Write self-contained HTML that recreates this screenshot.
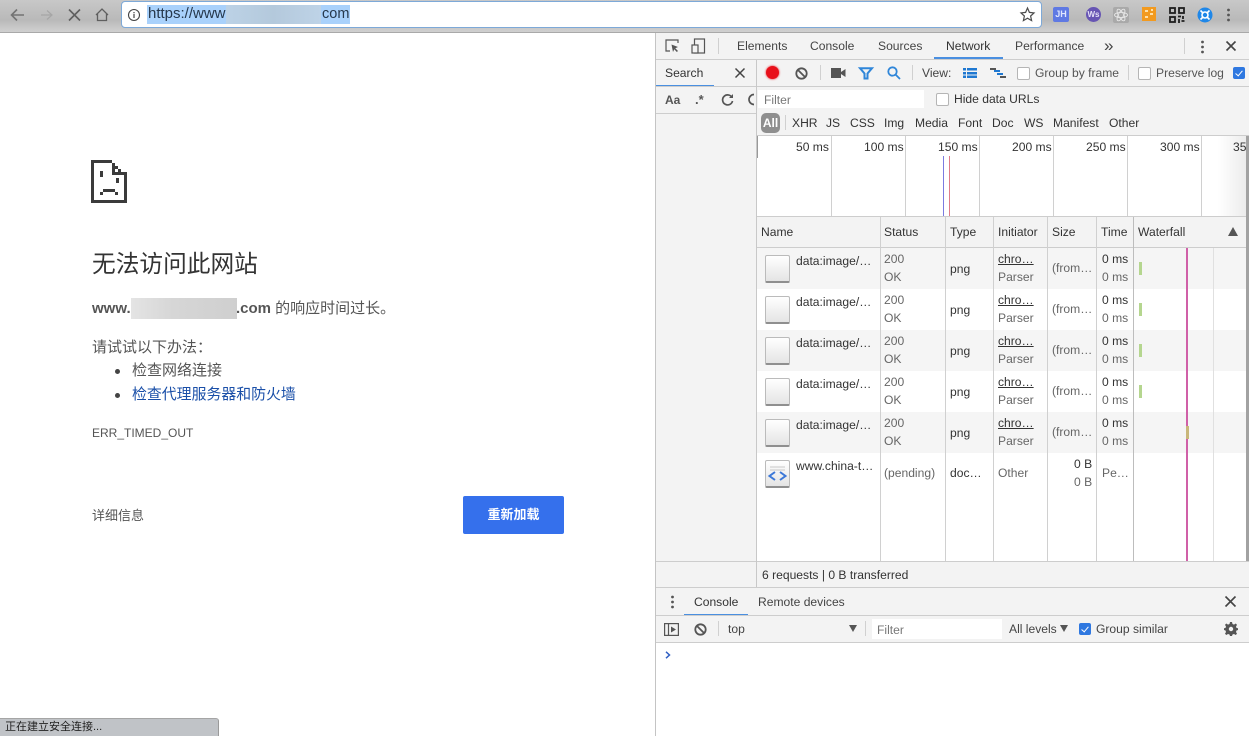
<!DOCTYPE html>
<html lang="zh">
<head>
<meta charset="utf-8">
<style>
html,body{margin:0;padding:0;width:1249px;height:736px;overflow:hidden;background:#fff}
body{position:relative;font-family:"Liberation Sans","Noto Sans CJK SC",sans-serif;font-size:12.1px;color:#333}
.a,.t{position:absolute}
.t{white-space:nowrap;line-height:16px}
.g{color:#666}
svg{position:absolute;overflow:visible}
.cb{position:absolute;width:11px;height:11px;background:#fff;border:1px solid #b5b5b5;border-radius:2px}
.cbc{position:absolute;width:12px;height:12px;background:#2f78e0;border-radius:2px}
.cbc:after{content:"";position:absolute;left:4px;top:1.5px;width:3px;height:6px;border:solid #fff;border-width:0 1.5px 1.5px 0;transform:rotate(40deg)}
.ic{position:absolute;width:22px;height:24px;background:linear-gradient(#fff,#e4e4e4);border:1px solid #bbb;border-bottom:2px solid #8f8f8f;border-radius:2px;box-sizing:border-box}
.v{position:absolute;width:1px;background:#d0d0d0}
.h{position:absolute;height:1px;background:#cdcdcd}
</style>
</head>
<body>
<!-- browser top bar -->
<div class="a" style="left:0;top:0;width:1249px;height:33px;background:linear-gradient(#c8c8c8,#b9b9b9 60%,#d2d2d2)"></div>
<div class="a" style="left:0;top:32px;width:1249px;height:1px;background:#a9a9a9"></div>
<svg style="left:0;top:0" width="120" height="33" fill="none" stroke-width="1.6">
<path d="M24 15H12M17 9.5 11.5 15 17 20.5" stroke="#737373"/>
<path d="M41 15H52M47 10.5 52 15 47 19.5" stroke="#a6a6a6" stroke-width="1.2"/>
<path d="M69 9.5 80 20.5M80 9.5 69 20.5" stroke="#5f5f5f"/>
<path d="M96 15 102 9 108 15M97.5 14V20.5H106.5V14" stroke="#5f5f5f" stroke-width="1.3"/>
</svg>
<!-- omnibox -->
<div class="a" style="left:121px;top:1px;width:919px;height:25px;background:#fff;border:1px solid #7da9d8;border-radius:4px"></div>
<svg style="left:127px;top:8px" width="14" height="14" fill="none" stroke="#444"><circle cx="7" cy="7" r="5.5" stroke-width="1.1"/><path d="M7 6v4M7 4v1.2" stroke-width="1.2"/></svg>
<div class="a" style="left:147px;top:5px;width:203px;height:19px;background:#a9d1fb"></div>
<div class="a" style="left:226px;top:5px;width:95px;height:19px;background:linear-gradient(90deg,#bcd2e6,#b4c9dc 50%,#bed3e7)"></div>
<div class="t" style="left:148px;top:6px;font-size:15px;color:#26384c">https://www</div>
<div class="t" style="left:322px;top:6px;font-size:14.5px;color:#26384c">com</div>
<svg style="left:1020px;top:7px" width="15" height="15" fill="none" stroke="#4c4c4c" stroke-width="1.2"><path d="M7.5 1 9.4 5.4 14 5.9 10.6 9 11.6 13.6 7.5 11.2 3.4 13.6 4.4 9 1 5.9 5.6 5.4Z"/></svg>
<!-- extensions -->
<div class="a" style="left:1053px;top:7px;width:16px;height:15px;background:#5f79e3;border-radius:2px;color:#dfe6ff;font-size:9px;font-weight:bold;line-height:15px;text-align:center">JH</div>
<div class="a" style="left:1086px;top:7px;width:15px;height:15px;background:#6755b3;border-radius:50%;color:#e6e2f7;font-size:8px;font-weight:bold;line-height:15px;text-align:center">Ws</div>
<div class="a" style="left:1113px;top:7px;width:16px;height:16px;background:#a9a9a9;border-radius:2px"></div>
<svg style="left:1113px;top:7px" width="16" height="16" fill="none" stroke="#e8e8e8" stroke-width=".9"><ellipse cx="8" cy="8" rx="6.5" ry="2.6"/><ellipse cx="8" cy="8" rx="6.5" ry="2.6" transform="rotate(60 8 8)"/><ellipse cx="8" cy="8" rx="6.5" ry="2.6" transform="rotate(120 8 8)"/></svg>
<div class="a" style="left:1142px;top:7px;width:14px;height:14px;background:#f29a1f"></div>
<svg style="left:1142px;top:7px" width="14" height="14" fill="#ffe0a8"><rect x="3" y="3" width="3" height="2"/><rect x="8" y="6" width="3" height="2"/><rect x="3" y="9" width="3" height="2"/><rect x="9" y="2" width="2" height="2"/></svg>
<svg style="left:1169px;top:7px" width="16" height="16" fill="none" stroke="#1e1e1e" stroke-width="1.8"><rect x="1" y="1" width="5" height="5"/><rect x="10" y="1" width="5" height="5"/><rect x="1" y="10" width="5" height="5"/><path d="M9 9.5h3M14 9v3M10 12v4M12.5 14h3"/></svg>
<svg style="left:1197px;top:7px" width="16" height="16"><circle cx="8" cy="8" r="7.5" fill="#1f87e8"/><circle cx="8" cy="8" r="3" fill="none" stroke="#fff" stroke-width="1.6"/><path d="M3.5 3.5 6 6M12.5 3.5 10 6M3.5 12.5 6 10M12.5 12.5 10 10" stroke="#fff" stroke-width="1.6"/></svg>
<svg style="left:1226px;top:8px" width="5" height="14" fill="#555"><circle cx="2.5" cy="2" r="1.4"/><circle cx="2.5" cy="7" r="1.4"/><circle cx="2.5" cy="12" r="1.4"/></svg>

<!-- error page -->
<svg style="left:91px;top:160px" width="37" height="43" fill="#3b3b3b" shape-rendering="crispEdges">
<path d="M0 0H21V3H3V40H33V15H36V43H0Z"/>
<rect x="21" y="3" width="3" height="3"/><rect x="24" y="6" width="3" height="3"/><rect x="27" y="9" width="3" height="3"/><rect x="30" y="12" width="6" height="3"/><rect x="21" y="6" width="3" height="9"/><rect x="21" y="12" width="9" height="3"/>
<rect x="9" y="11" width="3" height="6"/><rect x="25" y="18" width="3" height="5"/>
<rect x="12" y="29" width="12" height="3"/><rect x="9" y="32" width="3" height="3"/><rect x="24" y="32" width="3" height="3"/>
</svg>
<div class="t" style="left:92px;top:250px;font-size:23.7px;line-height:30px;color:#333">无法访问此网站</div>
<div class="t" style="left:92px;top:300px;font-size:15px;line-height:18px;color:#555"><b>www.</b></div>
<div class="a" style="left:131px;top:298px;width:106px;height:21px;background:linear-gradient(90deg,#e4e4e4,#d6d6d6 40%,#cfcfcf)"></div>
<div class="t" style="left:236px;top:300px;font-size:15px;line-height:18px;color:#555"><b>.com</b> 的响应时间过长。</div>
<div class="t" style="left:92px;top:339px;font-size:15px;line-height:18px;color:#555">请试试以下办法：</div>
<div class="a" style="left:115px;top:369px;width:5px;height:5px;border-radius:50%;background:#444"></div>
<div class="t" style="left:132px;top:362px;font-size:15px;line-height:18px;color:#555">检查网络连接</div>
<div class="a" style="left:115px;top:393px;width:5px;height:5px;border-radius:50%;background:#444"></div>
<div class="t" style="left:132px;top:386px;font-size:14.9px;line-height:18px;color:#1a4fa8">检查代理服务器和防火墙</div>
<div class="t" style="left:92px;top:425px;font-size:12px;color:#555">ERR_TIMED_OUT</div>
<div class="t" style="left:92px;top:508px;font-size:13px;color:#555">详细信息</div>
<div class="a" style="left:463px;top:496px;width:101px;height:38px;background:#3570ec;border-radius:2px;color:#fff;font-size:13px;font-weight:bold;line-height:38px;text-align:center">重新加载</div>
<div class="a" style="left:0;top:718px;width:219px;height:18px;background:#c0c3c7;border-top:1px solid #a5a5a5;border-right:1px solid #9a9a9a;border-top-right-radius:3px;box-sizing:border-box"></div>
<div class="t" style="left:5px;top:719px;font-size:11px;color:#222">正在建立安全连接...</div>

<!-- devtools -->
<div class="a" style="left:655px;top:33px;width:594px;height:703px;background:#fff"></div>
<div class="v" style="left:655px;top:33px;height:703px;background:#c4c4c4"></div>
<div class="a" style="left:656px;top:33px;width:593px;height:26px;background:#f3f3f3"></div>
<div class="h" style="left:656px;top:59px;width:593px"></div>
<svg style="left:664px;top:38px" width="44" height="16" fill="none" stroke="#555" stroke-width="1.2">
<path d="M6 13H2V2H14V5"/><path d="M7.5 6.5 14 9 11.3 10.2 14 13 12.800 14 10.300 11.200 9 14Z" fill="#555" stroke="none"/>
<rect x="30.500" y="1" width="10" height="14"/><rect x="28" y="7" width="6" height="8" fill="#f3f3f3"/>
</svg>
<div class="v" style="left:718px;top:38px;height:16px"></div>
<div class="t g" style="left:737px;top:38px;color:#444">Elements</div>
<div class="t g" style="left:810px;top:38px;color:#444">Console</div>
<div class="t g" style="left:878px;top:38px;color:#444">Sources</div>
<div class="t" style="left:946px;top:38px;color:#333">Network</div>
<div class="a" style="left:934px;top:57px;width:69px;height:2px;background:#4a8fe0"></div>
<div class="t g" style="left:1015px;top:38px;color:#444">Performance</div>
<div class="t g" style="left:1104px;top:38px;font-size:17px;color:#444">»</div>
<div class="v" style="left:1184px;top:38px;height:16px"></div>
<svg style="left:1200px;top:40px" width="5" height="14" fill="#555"><circle cx="2.5" cy="2" r="1.4"/><circle cx="2.5" cy="7" r="1.4"/><circle cx="2.5" cy="12" r="1.4"/></svg>
<svg style="left:1225px;top:40px" width="12" height="12" stroke="#444" stroke-width="1.6"><path d="M1.5 1.5 10.500 10.500M10.500 1.500 1.500 10.500"/></svg>

<!-- search pane -->
<div class="a" style="left:656px;top:60px;width:100px;height:501px;background:#f3f3f3"></div>
<div class="t" style="left:665px;top:65px;color:#333">Search</div>
<div class="a" style="left:656px;top:85px;width:58px;height:2px;background:#4a8fe0"></div>
<div class="h" style="left:656px;top:86px;width:100px"></div>
<svg style="left:735px;top:68px" width="10" height="10" stroke="#444" stroke-width="1.5"><path d="M.5.5 9.500 9.500M9.500.5.500 9.500"/></svg>
<div class="t" style="left:665px;top:92px;font-size:12px;font-weight:bold;color:#555">Aa</div>
<div class="t" style="left:695px;top:92px;font-size:13px;font-weight:bold;color:#555">.*</div>
<svg style="left:721px;top:93px" width="13" height="13" fill="none" stroke="#555" stroke-width="1.7"><path d="M11 4.500A5 5 0 1 0 11.500 8"/><path d="M12 1V5H8" fill="#555" stroke="none"/></svg>
<svg style="left:749px;top:93px" width="6" height="13" fill="none" stroke="#555" stroke-width="1.700"><path d="M5 1.500A5 5 0 0 0 5 11.500"/></svg>
<div class="h" style="left:656px;top:113px;width:100px"></div>
<div class="v" style="left:756px;top:60px;height:527px;background:#c8c8c8"></div>

<!-- network toolbar -->
<div class="a" style="left:757px;top:60px;width:492px;height:26px;background:#f3f3f3"></div>
<div class="h" style="left:757px;top:86px;width:492px"></div>
<div class="a" style="left:766px;top:66px;width:13px;height:13px;border-radius:50%;background:#e8101a;box-shadow:0 0 2px #e8101a"></div>
<svg style="left:795px;top:67px" width="13" height="13" fill="none" stroke="#555" stroke-width="1.800"><circle cx="6.500" cy="6.500" r="5.200"/><path d="M3 3 10 10"/></svg>
<div class="v" style="left:820px;top:65px;height:15px"></div>
<svg style="left:831px;top:68px" width="15" height="10" fill="#555"><rect x="0" y="0" width="10" height="10"/><path d="M10 4 14.500 1V9L10 6Z"/></svg>
<svg style="left:859px;top:67px" width="14" height="13" fill="none" stroke="#2f86d9" stroke-width="2"><path d="M1 1.200H13L8.500 6.500V11.500H5.500V6.500Z"/></svg>
<svg style="left:887px;top:66px" width="14" height="14" fill="none" stroke="#2f86d9" stroke-width="1.800"><circle cx="5.500" cy="5.500" r="4.200"/><path d="M8.500 8.500 13 13"/></svg>
<div class="v" style="left:912px;top:65px;height:15px"></div>
<div class="t g" style="left:922px;top:65px;color:#444">View:</div>
<svg style="left:963px;top:68px" width="14" height="10" fill="#1f78d1"><rect x="0" y="0" width="3" height="2.500"/><rect x="4" y="0" width="10" height="2.500"/><rect x="0" y="4" width="3" height="2.500"/><rect x="4" y="4" width="10" height="2.500"/><rect x="0" y="7.500" width="3" height="2.500"/><rect x="4" y="7.500" width="10" height="2.500"/></svg>
<svg style="left:990px;top:68px" width="16" height="10"><rect x="0" y="0" width="6" height="2" fill="#555"/><rect x="4" y="2" width="6" height="2" fill="#1f78d1"/><rect x="7" y="5" width="6" height="2" fill="#1f78d1"/><rect x="10" y="8" width="6" height="2" fill="#555"/></svg>
<div class="cb" style="left:1017px;top:67px"></div>
<div class="t g" style="left:1035px;top:65px;color:#555">Group by frame</div>
<div class="v" style="left:1128px;top:65px;height:15px"></div>
<div class="cb" style="left:1138px;top:67px"></div>
<div class="t g" style="left:1156px;top:65px;color:#555">Preserve log</div>
<div class="cbc" style="left:1233px;top:67px"></div>

<!-- filter rows -->
<div class="a" style="left:757px;top:87px;width:492px;height:49px;background:#f3f3f3"></div>
<div class="a" style="left:758px;top:90px;width:166px;height:18px;background:#fff"></div>
<div class="t" style="left:764px;top:92px;color:#777">Filter</div>
<div class="cb" style="left:936px;top:93px"></div>
<div class="t" style="left:954px;top:91px;color:#333">Hide data URLs</div>
<div class="a" style="left:761px;top:113px;width:19px;height:20px;background:#8f8f8f;border-radius:5px;color:#fff;font-size:12px;font-weight:bold;line-height:20px;text-align:center">All</div>
<div class="v" style="left:785px;top:115px;height:15px"></div>
<div class="t" style="left:792px;top:115px">XHR</div>
<div class="t" style="left:826px;top:115px">JS</div>
<div class="t" style="left:850px;top:115px">CSS</div>
<div class="t" style="left:884px;top:115px">Img</div>
<div class="t" style="left:915px;top:115px">Media</div>
<div class="t" style="left:958px;top:115px">Font</div>
<div class="t" style="left:992px;top:115px">Doc</div>
<div class="t" style="left:1024px;top:115px">WS</div>
<div class="t" style="left:1053px;top:115px">Manifest</div>
<div class="t" style="left:1109px;top:115px">Other</div>
<div class="h" style="left:757px;top:135px;width:492px"></div>

<!-- overview -->
<div class="a" style="left:1205px;top:136px;width:41px;height:81px;background:linear-gradient(90deg,#fff,#fff 30%,#ececec)"></div>
<div class="v" style="left:757px;top:136px;height:22px;background:#999"></div>
<div class="v" style="left:831px;top:136px;height:81px"></div>
<div class="v" style="left:905px;top:136px;height:81px"></div>
<div class="v" style="left:979px;top:136px;height:81px"></div>
<div class="v" style="left:1053px;top:136px;height:81px"></div>
<div class="v" style="left:1127px;top:136px;height:81px"></div>
<div class="v" style="left:1201px;top:136px;height:81px"></div>
<div class="t" style="left:796px;top:139px">50 ms</div>
<div class="t" style="left:864px;top:139px">100 ms</div>
<div class="t" style="left:938px;top:139px">150 ms</div>
<div class="t" style="left:1012px;top:139px">200 ms</div>
<div class="t" style="left:1086px;top:139px">250 ms</div>
<div class="t" style="left:1160px;top:139px">300 ms</div>
<div class="t" style="left:1233px;top:139px;width:13px;overflow:hidden">35</div>
<div class="a" style="left:943px;top:156px;width:1px;height:61px;background:#7b7be0"></div>
<div class="a" style="left:949px;top:156px;width:1px;height:61px;background:#e07c8a"></div>

<!-- table -->
<div class="a" style="left:757px;top:217px;width:489px;height:31px;background:#f3f3f3"></div>
<div class="h" style="left:757px;top:216px;width:492px"></div>
<div class="h" style="left:757px;top:247px;width:489px"></div>
<div class="a" style="left:757px;top:248px;width:489px;height:41px;background:#f5f5f5"></div>
<div class="a" style="left:757px;top:330px;width:489px;height:41px;background:#f5f5f5"></div>
<div class="a" style="left:757px;top:412px;width:489px;height:41px;background:#f5f5f5"></div>
<div class="v" style="left:880px;top:217px;height:344px"></div>
<div class="v" style="left:945px;top:217px;height:344px"></div>
<div class="v" style="left:993px;top:217px;height:344px"></div>
<div class="v" style="left:1047px;top:217px;height:344px"></div>
<div class="v" style="left:1096px;top:217px;height:344px"></div>
<div class="v" style="left:1133px;top:217px;height:344px;background:#bdbdbd"></div>
<div class="v" style="left:1213px;top:248px;height:313px;background:#e0e0e0"></div>
<div class="a" style="left:1186px;top:248px;width:2px;height:313px;background:#d060a8"></div>
<div class="t" style="left:761px;top:224px">Name</div>
<div class="t" style="left:884px;top:224px">Status</div>
<div class="t" style="left:950px;top:224px">Type</div>
<div class="t" style="left:998px;top:224px">Initiator</div>
<div class="t" style="left:1052px;top:224px">Size</div>
<div class="t" style="left:1101px;top:224px">Time</div>
<div class="t" style="left:1138px;top:224px">Waterfall</div>
<svg style="left:1228px;top:227px" width="10" height="9" fill="#555"><path d="M5 0 10 9H0Z"/></svg>

<!-- row 1 -->
<div class="ic" style="left:765px;top:255px;width:25px;height:28px"></div>
<div class="t" style="left:796px;top:253px">data:image/…</div>
<div class="t g" style="left:884px;top:251px">200</div>
<div class="t g" style="left:884px;top:269px">OK</div>
<div class="t" style="left:950px;top:261px">png</div>
<div class="t" style="left:998px;top:251px;text-decoration:underline">chro…</div>
<div class="t g" style="left:998px;top:269px">Parser</div>
<div class="t g" style="left:1052px;top:260px">(from…</div>
<div class="t" style="left:1102px;top:251px">0 ms</div>
<div class="t g" style="left:1102px;top:269px">0 ms</div>
<div class="a" style="left:1139px;top:262px;width:3px;height:13px;background:#b5d68f"></div>
<!-- row 2 -->
<div class="ic" style="left:765px;top:296px;width:25px;height:28px"></div>
<div class="t" style="left:796px;top:294px">data:image/…</div>
<div class="t g" style="left:884px;top:292px">200</div>
<div class="t g" style="left:884px;top:310px">OK</div>
<div class="t" style="left:950px;top:302px">png</div>
<div class="t" style="left:998px;top:292px;text-decoration:underline">chro…</div>
<div class="t g" style="left:998px;top:310px">Parser</div>
<div class="t g" style="left:1052px;top:301px">(from…</div>
<div class="t" style="left:1102px;top:292px">0 ms</div>
<div class="t g" style="left:1102px;top:310px">0 ms</div>
<div class="a" style="left:1139px;top:303px;width:3px;height:13px;background:#b5d68f"></div>
<!-- row 3 -->
<div class="ic" style="left:765px;top:337px;width:25px;height:28px"></div>
<div class="t" style="left:796px;top:335px">data:image/…</div>
<div class="t g" style="left:884px;top:333px">200</div>
<div class="t g" style="left:884px;top:351px">OK</div>
<div class="t" style="left:950px;top:343px">png</div>
<div class="t" style="left:998px;top:333px;text-decoration:underline">chro…</div>
<div class="t g" style="left:998px;top:351px">Parser</div>
<div class="t g" style="left:1052px;top:342px">(from…</div>
<div class="t" style="left:1102px;top:333px">0 ms</div>
<div class="t g" style="left:1102px;top:351px">0 ms</div>
<div class="a" style="left:1139px;top:344px;width:3px;height:13px;background:#b5d68f"></div>
<!-- row 4 -->
<div class="ic" style="left:765px;top:378px;width:25px;height:28px"></div>
<div class="t" style="left:796px;top:376px">data:image/…</div>
<div class="t g" style="left:884px;top:374px">200</div>
<div class="t g" style="left:884px;top:392px">OK</div>
<div class="t" style="left:950px;top:384px">png</div>
<div class="t" style="left:998px;top:374px;text-decoration:underline">chro…</div>
<div class="t g" style="left:998px;top:392px">Parser</div>
<div class="t g" style="left:1052px;top:383px">(from…</div>
<div class="t" style="left:1102px;top:374px">0 ms</div>
<div class="t g" style="left:1102px;top:392px">0 ms</div>
<div class="a" style="left:1139px;top:385px;width:3px;height:13px;background:#b5d68f"></div>
<!-- row 5 -->
<div class="ic" style="left:765px;top:419px;width:25px;height:28px"></div>
<div class="t" style="left:796px;top:417px">data:image/…</div>
<div class="t g" style="left:884px;top:415px">200</div>
<div class="t g" style="left:884px;top:433px">OK</div>
<div class="t" style="left:950px;top:425px">png</div>
<div class="t" style="left:998px;top:415px;text-decoration:underline">chro…</div>
<div class="t g" style="left:998px;top:433px">Parser</div>
<div class="t g" style="left:1052px;top:424px">(from…</div>
<div class="t" style="left:1102px;top:415px">0 ms</div>
<div class="t g" style="left:1102px;top:433px">0 ms</div>
<div class="a" style="left:1186px;top:426px;width:3px;height:13px;background:#c9b77a"></div>
<!-- row 6 -->
<div class="ic" style="left:765px;top:460px;width:25px;height:28px"></div>
<svg style="left:767px;top:465px" width="21" height="18" fill="none"><path d="M3 2H18M3 5H18" stroke="#c8c8c8"/><path d="M8 7 2.500 11 8 15M13 7 18.500 11 13 15" stroke="#3c78d8" stroke-width="2"/></svg>
<div class="t" style="left:796px;top:458px">www.china-t…</div>
<div class="t g" style="left:884px;top:465px">(pending)</div>
<div class="t" style="left:950px;top:465px">doc…</div>
<div class="t g" style="left:998px;top:465px">Other</div>
<div class="t" style="left:1074px;top:456px">0 B</div>
<div class="t g" style="left:1074px;top:474px">0 B</div>
<div class="t g" style="left:1102px;top:465px">Pe…</div>

<div class="a" style="left:1246px;top:136px;width:3px;height:425px;background:#a2a2a2"></div>

<!-- status bar -->
<div class="a" style="left:656px;top:561px;width:593px;height:26px;background:#f3f3f3"></div>
<div class="h" style="left:656px;top:561px;width:593px"></div>
<div class="h" style="left:656px;top:587px;width:593px"></div>
<div class="v" style="left:756px;top:561px;height:26px;background:#c8c8c8"></div>
<div class="t" style="left:762px;top:567px">6 requests | 0 B transferred</div>

<!-- drawer -->
<div class="a" style="left:656px;top:588px;width:593px;height:27px;background:#f3f3f3"></div>
<svg style="left:670px;top:595px" width="5" height="14" fill="#555"><circle cx="2.500" cy="2" r="1.400"/><circle cx="2.500" cy="7" r="1.400"/><circle cx="2.500" cy="12" r="1.400"/></svg>
<div class="t" style="left:694px;top:594px">Console</div>
<div class="a" style="left:684px;top:614px;width:64px;height:2px;background:#4a8fe0"></div>
<div class="t g" style="left:758px;top:594px;color:#444">Remote devices</div>
<svg style="left:1225px;top:596px" width="11" height="11" stroke="#444" stroke-width="1.600"><path d="M.5.5 10.500 10.500M10.500.5.500 10.500"/></svg>
<div class="h" style="left:656px;top:615px;width:593px"></div>
<div class="a" style="left:656px;top:616px;width:593px;height:26px;background:#f3f3f3"></div>
<div class="h" style="left:656px;top:642px;width:593px"></div>
<svg style="left:664px;top:623px" width="15" height="13" fill="none" stroke="#555" stroke-width="1.200"><rect x=".6" y=".6" width="13.800" height="11.800"/><path d="M4.500 1V12"/><path d="M7 3.500 12 6.500 7 9.500Z" fill="#555" stroke="none"/></svg>
<svg style="left:694px;top:623px" width="13" height="13" fill="none" stroke="#555" stroke-width="1.800"><circle cx="6.500" cy="6.500" r="5.200"/><path d="M3 3 10 10"/></svg>
<div class="v" style="left:718px;top:621px;height:15px"></div>
<div class="t" style="left:728px;top:621px;color:#444">top</div>
<svg style="left:849px;top:625px" width="8" height="7" fill="#555"><path d="M0 0H8L4 7Z"/></svg>
<div class="v" style="left:865px;top:621px;height:15px"></div>
<div class="a" style="left:872px;top:619px;width:130px;height:20px;background:#fff"></div>
<div class="t" style="left:877px;top:622px;color:#777">Filter</div>
<div class="t g" style="left:1009px;top:621px;color:#444">All levels</div>
<svg style="left:1060px;top:625px" width="8" height="7" fill="#555"><path d="M0 0H8L4 7Z"/></svg>
<div class="cbc" style="left:1079px;top:623px"></div>
<div class="t g" style="left:1096px;top:621px;color:#444">Group similar</div>
<svg style="left:1224px;top:622px" width="14" height="14" fill="#555"><path d="M6 0H8L8.500 2 10 2.600 11.800 1.500 13 2.900 12 4.500 12.500 6 14 6.300V8L12.500 8.500 12 10 13 11.700 11.700 13 10 12 8.500 12.500 8 14H6L5.500 12.500 4 12 2.300 13 1 11.700 2 10 1.500 8.500 0 8V6.300L1.500 6 2 4.500 1 2.900 2.300 1.500 4 2.600 5.500 2Z"/><circle cx="7" cy="7" r="2.200" fill="#f3f3f3"/></svg>
<svg style="left:665px;top:651px" width="6" height="8" fill="none" stroke="#2f5fc4" stroke-width="1.500"><path d="M1 .8 4.500 4 1 7.200"/></svg>
</body>
</html>
